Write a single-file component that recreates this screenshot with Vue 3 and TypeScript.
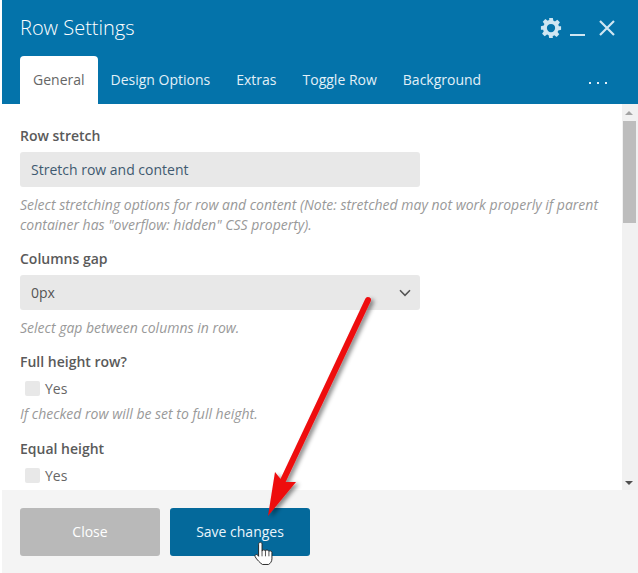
<script setup lang="ts">
const tabs = ["General", "Design Options", "Extras", "Toggle Row", "Background"]
</script>

<template>
  <div class="page">
    <div class="panel">
      <header class="panel-head">
        <div class="title-row">
          <h1 class="title">Row Settings</h1>
          <div class="head-icons">
            <svg class="gear" width="22" height="22" viewBox="0 0 24 24" aria-hidden="true">
              <path
                fill="#cfe6f2"
                fill-rule="evenodd"
                d="M10 1h4l.6 3.1c.6.2 1.2.4 1.7.7l2.6-1.8 2.8 2.8-1.8 2.6c.3.5.6 1.1.7 1.7L23 10v4l-3.1.6c-.2.6-.4 1.2-.7 1.7l1.8 2.6-2.8 2.8-2.6-1.8c-.5.3-1.1.6-1.7.7L14 23h-4l-.6-3.1c-.6-.2-1.2-.4-1.7-.7L5.100 21 2.300 18.200l1.800-2.600c-.3-.5-.6-1.100-.7-1.700L1 14v-4l3.100-.6c.2-.6.4-1.200.7-1.700L3 5.100 5.800 2.300l2.600 1.800c.5-.3 1.100-.6 1.700-.7zM12 7.500a4.500 4.500 0 1 0 0 9 4.500 4.500 0 0 0 0-9z"
              />
            </svg>
            <span class="minimize"></span>
            <svg class="close-x" width="16" height="16" viewBox="0 0 16 16" aria-hidden="true">
              <path d="M1 1l14 14M15 1L1 15" stroke="#cfe6f2" stroke-width="2.200" fill="none" />
            </svg>
          </div>
        </div>
        <nav class="tabs">
          <a v-for="(tab, i) in tabs" :key="tab" class="tab" :class="{ active: i === 0 }">{{ tab }}</a>
          <span class="more">
            <i></i><i></i><i></i>
          </span>
        </nav>
      </header>

      <div class="body">
        <main class="content">
          <section class="field">
            <label class="field-label">Row stretch</label>
            <div class="select">Stretch row and content</div>
            <p class="help">
              Select stretching options for row and content (Note: stretched may not work properly if parent
              container has "overflow: hidden" CSS property).
            </p>
          </section>

          <section class="field">
            <label class="field-label">Columns gap</label>
            <div class="select gap-select">
              <span>0px</span>
              <svg width="12" height="8" viewBox="0 0 12 8" aria-hidden="true">
                <path d="M1 1.300l5 5 5-5" stroke="#555" stroke-width="1.600" fill="none" />
              </svg>
            </div>
            <p class="help">Select gap between columns in row.</p>
          </section>

          <section class="field">
            <label class="field-label">Full height row?</label>
            <div class="check"><span class="box"></span>Yes</div>
            <p class="help">If checked row will be set to full height.</p>
          </section>

          <section class="field">
            <label class="field-label">Equal height</label>
            <div class="check"><span class="box"></span>Yes</div>
          </section>
        </main>

        <div class="scrollbar">
          <span class="arrow-up"></span>
          <span class="thumb"></span>
          <span class="arrow-down"></span>
        </div>
      </div>

      <footer class="panel-foot">
        <button class="btn btn-close" type="button">Close</button>
        <button class="btn btn-save" type="button">Save changes</button>
      </footer>
    </div>

    <!-- red annotation arrow and the cursor sit on top of the dialog -->
    <svg class="annotation" width="638" height="573" viewBox="0 0 638 573" aria-hidden="true">
      <defs>
        <filter id="arrow-shadow" x="-30%" y="-10%" width="160%" height="120%">
          <feDropShadow dx="3" dy="2" stdDeviation="2" flood-color="#000" flood-opacity="0.45" />
        </filter>
      </defs>
      <g filter="url(#arrow-shadow)">
        <path d="M368 300L280 487" stroke="#ee0a10" stroke-width="6" stroke-linecap="round" fill="none" />
        <path d="M268 516L275 472L283 482L296 482Z" fill="#ee0a10" />
      </g>
      <g transform="translate(35 79) scale(0.86)">
        <path
          d="M260 541c0-3 4-3 4 0v8c0-2 4-2 4 0 0-2 4-1.500 4 .5 0-1.500 3.500-1 3.500 1v7.500c0 3-2 5.500-4 6.500h-7c-2-1-7-6-8.500-9-1-2 1.500-3.500 3-2l1 1.500z"
          fill="#fff"
          stroke="#222"
          stroke-width="1.100"
          stroke-linejoin="round"
        />
        <path d="M264 549v6M268 549v6M272 550v5" stroke="#222" stroke-width="0.900" fill="none" />
      </g>
    </svg>
  </div>
</template>

<style scoped>
.page {
  position: relative;
  width: 638px;
  height: 573px;
  overflow: hidden;
  background: #fff;
  padding-left: 2px;
  box-sizing: border-box;
  font-family: "Open Sans", "Liberation Sans", sans-serif;
}

.panel {
  display: flex;
  flex-direction: column;
  height: 100%;
}

.panel-head {
  height: 104px;
  flex: none;
  background: #0473aa;
  padding: 0 18px;
  display: flex;
  flex-direction: column;
  justify-content: space-between;
}

.title-row {
  display: flex;
  justify-content: space-between;
  align-items: center;
  height: 56px;
  padding-right: 5px;
}

.title {
  margin: 0 0 2px;
  font-size: 20px;
  font-weight: 300;
  color: #fff;
}

.head-icons {
  display: flex;
  align-items: center;
  gap: 8px;
}

.minimize {
  width: 15px;
  height: 2px;
  background: #cfe6f2;
  margin-top: 14px;
}

.close-x {
  margin-left: 6px;
}

.tabs {
  display: flex;
  align-items: stretch;
  height: 48px;
}

.tab {
  display: flex;
  align-items: center;
  padding: 0 13px 2px;
  font-size: 14px;
  color: #e2f0f8;
  white-space: nowrap;
}

.tab.active {
  background: #fff;
  color: #666;
  border-radius: 4px 4px 0 0;
}

.more {
  margin-left: auto;
  margin-right: 13px;
  display: flex;
  align-items: center;
  gap: 6px;
  padding-top: 6px;
}

.more i {
  width: 2px;
  height: 2px;
  background: #e2f0f8;
}

.body {
  flex: 1;
  min-height: 0;
  display: flex;
  overflow: hidden;
}

.content {
  flex: 1;
  min-width: 0;
  padding: 22px 18px 0;
  overflow: hidden;
}

.field {
  margin-bottom: 14px;
}

.field-label {
  display: block;
  font-size: 14px;
  line-height: 20px;
  font-weight: 600;
  color: #5a5a5a;
  margin-bottom: 6px;
}

.select {
  width: 400px;
  height: 35px;
  box-sizing: border-box;
  background: #e8e8e8;
  border-radius: 3px;
  padding: 0 11px;
  display: flex;
  align-items: center;
  font-size: 14px;
  color: #3f5a70;
}

.gap-select {
  justify-content: space-between;
  color: #555;
}

.gap-select svg {
  margin-right: -2px;
}

.help {
  margin: 8px 0 0;
  font-size: 14px;
  line-height: 20px;
  font-style: italic;
  color: #999;
}

.check {
  display: flex;
  align-items: center;
  height: 20px;
  padding-left: 5px;
  font-size: 14px;
  color: #666;
}

.box {
  width: 15px;
  height: 15px;
  background: #e8e8e8;
  border-radius: 2px;
  margin-right: 5px;
}

.check + .help {
  margin: 6px 0 15px;
}

.scrollbar {
  width: 16px;
  flex: none;
  background: #f1f1f1;
  position: relative;
}

.thumb {
  position: absolute;
  left: 1px;
  top: 17px;
  width: 13px;
  height: 102px;
  background: #bdbdbd;
}

.arrow-up,
.arrow-down {
  position: absolute;
  left: 3px;
  width: 0;
  height: 0;
  border-left: 4px solid transparent;
  border-right: 4px solid transparent;
}

.arrow-up {
  top: 7px;
  border-bottom: 4px solid #a3a3a3;
}

.arrow-down {
  bottom: 5px;
  border-top: 4px solid #505050;
}

.panel-foot {
  height: 83px;
  flex: none;
  background: #f4f4f4;
  display: flex;
  gap: 10px;
  padding: 18px 18px 0;
  box-sizing: border-box;
}

.btn {
  width: 140px;
  height: 48px;
  border: 0;
  border-radius: 3px;
  font-family: inherit;
  font-size: 14px;
  padding: 0 0 2px;
}

.btn-close {
  background: #b9b9b9;
  color: #fff;
}

.btn-save {
  background: #04699b;
  color: #eaf5fb;
}

.annotation {
  position: absolute;
  left: 0;
  top: 0;
  pointer-events: none;
}
</style>

<style>
html,
body {
  margin: 0;
  background: #fff;
}
</style>
